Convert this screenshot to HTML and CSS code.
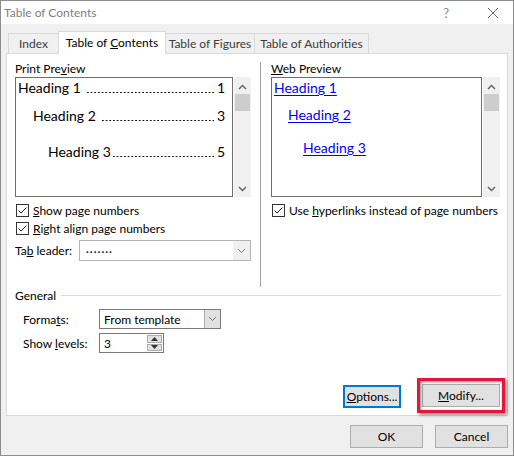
FILE: index.html
```
<!DOCTYPE html>
<html>
<head>
  <title>Table of Contents</title>
  <link rel="stylesheet" href="styles.css">
</head>
<body>
  <div class="dialog">
    <div class="titlebar">
      <span class="title">Table of Contents</span>
      <span class="help">?</span>
      <svg class="close" width="12" height="12" viewBox="0 0 12 12">
        <path d="M1 1 L11 11 M11 1 L1 11" stroke="#6d6d6d" stroke-width="1" fill="none"/>
      </svg>
    </div>

    <div class="content">
      <div class="tabs">
        <div class="tab tab-index"><span>Index</span></div>
        <div class="tab tab-active"><span>Table of <u>C</u>ontents</span></div>
        <div class="tab tab-figures"><span>Table of Figures</span></div>
        <div class="tab tab-auth"><span>Table of Authorities</span></div>
      </div>

      <div class="panel">
        <div class="columns">
          <div class="col-left">
            <div class="label">Print Pre<u>v</u>iew</div>
            <div class="preview-wrap">
              <div class="preview">
                <!-- dot leaders are drawn as a repeating background -->
                <div class="toc-row toc-1"><span class="toc-name">Heading 1</span><span class="toc-dots"></span><span class="toc-num">1</span></div>
                <div class="toc-row toc-2"><span class="toc-name">Heading 2</span><span class="toc-dots"></span><span class="toc-num">3</span></div>
                <div class="toc-row toc-3"><span class="toc-name">Heading 3</span><span class="toc-dots toc-tight"></span><span class="toc-num">5</span></div>
              </div>
              <div class="scrollbar">
                <svg width="9" height="6" viewBox="0 0 9 6"><path d="M1 5 L4.5 1.5 L8 5" stroke="#606060" stroke-width="1.4" fill="none"/></svg>
                <div class="thumb"></div>
                <svg class="scroll-down" width="9" height="6" viewBox="0 0 9 6"><path d="M1 1 L4.5 4.5 L8 1" stroke="#606060" stroke-width="1.4" fill="none"/></svg>
              </div>
            </div>

            <div class="check-row">
              <span class="checkbox"><svg width="11" height="11" viewBox="0 0 11 11"><path d="M1.5 5.5 L4 8 L9.5 2.5" stroke="#222" stroke-width="1" fill="none"/></svg></span>
              <span><u>S</u>how page numbers</span>
            </div>
            <div class="check-row">
              <span class="checkbox"><svg width="11" height="11" viewBox="0 0 11 11"><path d="M1.5 5.5 L4 8 L9.5 2.5" stroke="#222" stroke-width="1" fill="none"/></svg></span>
              <span><u>R</u>ight align page numbers</span>
            </div>

            <div class="leader-row">
              <span class="leader-label">Ta<u>b</u> leader:</span>
              <div class="combo combo-leader">
                <span class="combo-value leader-dots">.......</span>
                <span class="combo-btn flat">
                  <svg width="9" height="6" viewBox="0 0 9 6"><path d="M1 1 L4.5 4.5 L8 1" stroke="#7a7a7a" stroke-width="1" fill="none"/></svg>
                </span>
              </div>
            </div>
          </div>

          <div class="divider"></div>

          <div class="col-right">
            <div class="label"><u>W</u>eb Preview</div>
            <div class="preview-wrap">
              <div class="preview web">
                <div class="web-row web-1"><a>Heading 1</a></div>
                <div class="web-row web-2"><a>Heading 2</a></div>
                <div class="web-row web-3"><a>Heading 3</a></div>
              </div>
              <div class="scrollbar">
                <svg width="9" height="6" viewBox="0 0 9 6"><path d="M1 5 L4.5 1.5 L8 5" stroke="#606060" stroke-width="1.4" fill="none"/></svg>
                <div class="thumb"></div>
                <svg class="scroll-down" width="9" height="6" viewBox="0 0 9 6"><path d="M1 1 L4.5 4.5 L8 1" stroke="#606060" stroke-width="1.4" fill="none"/></svg>
              </div>
            </div>
            <div class="check-row">
              <span class="checkbox"><svg width="11" height="11" viewBox="0 0 11 11"><path d="M1.5 5.5 L4 8 L9.5 2.5" stroke="#222" stroke-width="1" fill="none"/></svg></span>
              <span>Use <u>h</u>yperlinks instead of page numbers</span>
            </div>
          </div>
        </div>

        <div class="general">
          <div class="group-title"><span>General</span><div class="group-line"></div></div>
          <div class="field-row">
            <span class="field-label">Forma<u>t</u>s:</span>
            <div class="combo combo-formats">
              <span class="combo-value">From template</span>
              <span class="combo-btn">
                <svg width="9" height="6" viewBox="0 0 9 6"><path d="M1 1 L4.5 4.5 L8 1" stroke="#7a7a7a" stroke-width="1" fill="none"/></svg>
              </span>
            </div>
          </div>
          <div class="field-row">
            <span class="field-label">Show <u>l</u>evels:</span>
            <div class="spinner">
              <span class="spin-value">3</span>
              <span class="spin-btns">
                <span class="spin-btn"><svg width="7" height="4" viewBox="0 0 7 4"><path d="M0 4 L3.5 0 L7 4 Z" fill="#333"/></svg></span>
                <span class="spin-btn"><svg width="7" height="4" viewBox="0 0 7 4"><path d="M0 0 L3.5 4 L7 0 Z" fill="#333"/></svg></span>
              </span>
            </div>
          </div>
        </div>

        <div class="panel-actions">
          <button class="btn btn-default btn-options"><u>O</u>ptions...</button>
          <span class="highlight-wrap">
            <button class="btn btn-modify"><u>M</u>odify...</button>
            <span class="highlight"></span>
          </span>
        </div>
      </div>

      <div class="footer">
        <button class="btn btn-footer">OK</button>
        <button class="btn btn-footer">Cancel</button>
      </div>
    </div>
  </div>
</body>
</html>
```

FILE: styles.css
```
* {
  box-sizing: border-box;
}
body {
  margin: 0;
  font-family: 'Lato', 'Noto Sans', sans-serif;
  font-size: 12px;
  color: #000;
}
u {
  text-decoration: underline;
  text-underline-offset: 1px;
}
.dialog {
  width: 514px;
  height: 456px;
  border: 1px solid #8c8c8c;
  background-color: #f0f0f0;
  display: flex;
  flex-direction: column;
}
.titlebar {
  height: 23px;
  background-color: #fff;
  display: flex;
  align-items: center;
  padding-left: 3px;
  flex-shrink: 0;
}
.title {
  color: #808080;
  flex: 1;
}
.help {
  color: #8a8a8a;
  font-size: 13px;
  margin-right: 38px;
}
.close {
  margin-right: 14px;
}
.content {
  flex: 1;
  padding: 7px 5px 0 5px;
  display: flex;
  flex-direction: column;
}
.tabs {
  display: flex;
  align-items: flex-end;
  height: 22px;
  padding-left: 2px;
}
.tab {
  height: 20px;
  border: 1px solid #d9d9d9;
  border-bottom: none;
  color: #3c3c3c;
  display: flex;
  align-items: center;
  justify-content: center;
  margin-left: -1px;
}
.tab-index {
  width: 51px;
  margin-left: 0;
}
.tab-active {
  width: 108px;
  height: 23px;
  background-color: #fff;
  color: #000;
  margin-bottom: -1px;
  position: relative;
  z-index: 1;
  padding-bottom: 2px;
}
.tab-figures {
  width: 90px;
}
.tab-auth {
  width: 115px;
}
.panel {
  height: 363px;
  background-color: #fff;
  border: 1px solid #d9d9d9;
  display: flex;
  flex-direction: column;
}
.columns {
  display: flex;
  height: 233px;
  padding: 7px 0 0 8px;
}
.col-left {
  width: 236px;
}
.col-right {
  width: 229px;
}
.divider {
  width: 1px;
  background-color: #a0a0a0;
  margin: 1px 10px 0 9px;
}
.label {
  height: 16px;
  line-height: 15px;
}
.preview-wrap {
  display: flex;
  height: 120px;
}
.preview {
  flex: 1;
  border: 1px solid #6e6e6e;
  padding: 0 7px 0 2px;
  font-size: 14px;
  overflow: hidden;
}
.scrollbar {
  width: 17px;
  margin-left: 1px;
  background-color: #f0f0f0;
  display: flex;
  flex-direction: column;
  align-items: center;
  padding-top: 7px;
}
.thumb {
  width: 15px;
  height: 17px;
  background-color: #cdcdcd;
  margin-top: 4px;
}
.scroll-down {
  margin-top: auto;
  margin-bottom: 5px;
}
.toc-row {
  display: flex;
  height: 18px;
  line-height: 18px;
  white-space: nowrap;
}
.toc-1 {
  margin-top: 1px;
}
.toc-2 {
  margin-top: 10px;
  padding-left: 15px;
}
.toc-3 {
  margin-top: 18px;
  padding-left: 30px;
}
.toc-name,
.toc-num {
  flex-shrink: 0;
}
.toc-dots {
  flex: 1;
  margin: 0 3px 0 5px;
  background-image: radial-gradient(circle, #111 0.8px, transparent 1.1px);
  background-size: 3.7px 3px;
  background-repeat: repeat-x;
  background-position: left 0 top 12px;
}
.toc-tight {
  margin-left: 1px;
}
.web {
  padding-left: 2px;
}
.web-row {
  height: 18px;
  line-height: 18px;
}
.web-row a {
  color: #0000ff;
  text-decoration: underline;
  text-underline-offset: 2px;
}
.web-1 {
  margin-top: 1px;
}
.web-2 {
  margin-top: 9px;
  padding-left: 14px;
}
.web-3 {
  margin-top: 15px;
  padding-left: 29px;
}
.check-row {
  display: flex;
  align-items: center;
  height: 18px;
  white-space: nowrap;
}
.preview-wrap + .check-row {
  margin-top: 4px;
}
.checkbox {
  width: 13px;
  height: 13px;
  border: 1px solid #333;
  background-color: #fff;
  margin: 0 4px 0 1px;
  display: flex;
  align-items: center;
  justify-content: center;
}
.checkbox svg {
  display: block;
}
.leader-row {
  display: flex;
  align-items: center;
  margin-top: 3px;
}
.leader-label {
  width: 64px;
}
.combo {
  height: 21px;
  border: 1px solid #adadad;
  display: flex;
  align-items: stretch;
  background-color: #fff;
}
.combo-leader {
  width: 172px;
  border-color: #b4b4b4;
}
.combo-value {
  flex: 1;
  padding-left: 6px;
  display: flex;
  align-items: center;
}
.leader-dots {
  color: #10105a;
  font-weight: bold;
  letter-spacing: 1px;
  padding-bottom: 4px;
}
.combo-btn {
  width: 17px;
  display: flex;
  align-items: center;
  justify-content: center;
  background-color: #e1e1e1;
  border-left: 1px solid #adadad;
}
.combo-btn.flat {
  background-color: #f0f0f0;
  border-left: none;
}
.general {
  padding: 0 6px 0 8px;
}
.group-title {
  display: flex;
  align-items: center;
  height: 16px;
}
.group-line {
  flex: 1;
  height: 1px;
  background-color: #dcdcdc;
  margin-left: 5px;
}
.field-row {
  display: flex;
  align-items: center;
  padding-left: 8px;
  height: 20px;
}
.group-title + .field-row {
  margin-top: 6px;
}
.field-row + .field-row {
  margin-top: 4px;
}
.field-label {
  width: 76px;
}
.combo-formats {
  width: 122px;
  height: 20px;
  border-color: #7a7a7a;
}
.combo-formats .combo-value {
  padding-left: 4px;
}
.combo-formats .combo-btn {
  width: 16px;
}
.spinner {
  width: 65px;
  height: 20px;
  border: 1px solid #7a7a7a;
  display: flex;
  background-color: #fff;
}
.spin-value {
  flex: 1;
  padding-left: 4px;
  display: flex;
  align-items: center;
}
.spin-btns {
  width: 16px;
  display: flex;
  flex-direction: column;
  padding: 1px 1px 1px 0;
  gap: 1px;
}
.spin-btn {
  flex: 1;
  background-color: #e1e1e1;
  border: 1px solid #adadad;
  display: flex;
  align-items: center;
  justify-content: center;
}
.panel-actions {
  margin-top: auto;
  display: flex;
  justify-content: flex-end;
  align-items: flex-end;
  gap: 21px;
  padding: 0 7px 7px 0;
}
.btn {
  font-family: 'Lato', 'Noto Sans', sans-serif;
  font-size: 12px;
  color: #000;
  background-color: #e1e1e1;
  border: 1px solid #adadad;
  height: 23px;
  padding: 0;
}
.btn-options {
  width: 58px;
  border: 2px solid #0078d7;
}
.btn-modify {
  width: 78px;
  display: block;
  margin-bottom: 1px;
}
.highlight-wrap {
  position: relative;
  display: block;
}
.highlight {
  position: absolute;
  left: -5px;
  right: -5px;
  top: -6px;
  bottom: -5px;
  border: 3px solid #e3173e;
  box-shadow: 2px 2px 3px rgba(0, 0, 0, 0.45), inset 1px 1px 3px rgba(0, 0, 0, 0.5);
}
.footer {
  display: flex;
  justify-content: flex-end;
  gap: 12px;
  padding: 9px 0 0 0;
}
.btn-footer {
  width: 73px;
  height: 23px;
}
```
